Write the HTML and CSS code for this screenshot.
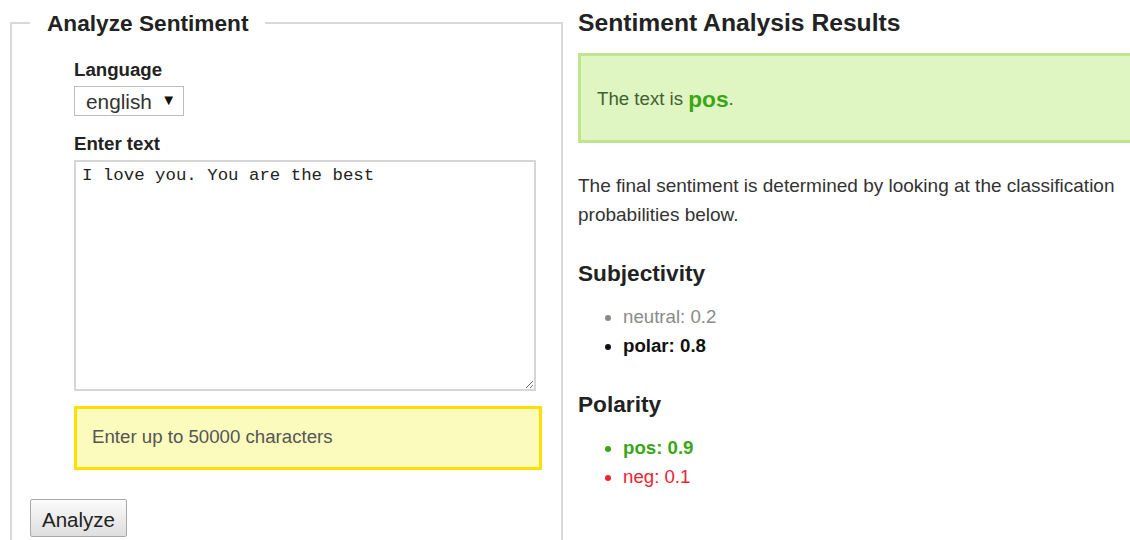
FILE: index.html
```html
<!DOCTYPE html>
<html lang="en">
<head>
<meta charset="utf-8">
<title>Sentiment Analysis</title>
<link rel="stylesheet" href="styles.css">
</head>
<body>
<div class="page">
  <form class="analyze-form">
    <fieldset class="analyze-box">
      <legend class="analyze-title">Analyze Sentiment</legend>
      <div class="fields">
        <label class="field-label" for="language">Language</label>
        <div class="select-wrap">
          <select id="language" class="lang-select">
            <option>english</option>
          </select>
        </div>
        <label class="field-label label-text" for="text">Enter text</label>
        <textarea id="text" class="text-input">I love you. You are the best</textarea>
        <div class="notice">Enter up to 50000 characters</div>
      </div>
      <button type="button" class="analyze-btn">Analyze</button>
    </fieldset>
  </form>

  <section class="results">
    <h2 class="results-title">Sentiment Analysis Results</h2>
    <div class="verdict">The text is <strong class="verdict-label">pos</strong>.</div>
    <p class="explain">The final sentiment is determined by looking at the classification probabilities below.</p>

    <h3 class="group-title">Subjectivity</h3>
    <ul class="probs">
      <li class="prob neutral">neutral: 0.2</li>
      <li class="prob polar">polar: 0.8</li>
    </ul>

    <h3 class="group-title">Polarity</h3>
    <ul class="probs">
      <li class="prob pos">pos: 0.9</li>
      <li class="prob neg">neg: 0.1</li>
    </ul>
  </section>
</div>
</body>
</html>
```

FILE: styles.css
```css
html, body {
  margin: 0;
  padding: 0;
  overflow: hidden;
  background: #fff;
}

body {
  font-family: "Liberation Sans", Arial, sans-serif;
  font-size: 18.67px;
  color: #333;
}

.page {
  display: flex;
  align-items: flex-start;
  width: 1300px;
}

/* left: input form */
.analyze-form {
  margin: 10px 0 0 10px;
  width: 553px;
  flex: none;
}

.analyze-box {
  margin: 0;
  border: 2px solid #d9d9d9;
  padding: 0 18px 30px 18px;
  min-width: 0;
}

.analyze-title {
  font-size: 22.67px;
  font-weight: bold;
  line-height: 26px;
  color: #222;
  padding: 0 17px;
}

.fields {
  display: flex;
  flex-direction: column;
  align-items: flex-start;
  margin-left: 44px;
  padding-top: 23px;
}

.field-label {
  display: block;
  font-weight: bold;
  line-height: 22px;
  color: #222;
}

.label-text {
  margin-top: 17px;
}

.select-wrap {
  position: relative;
  margin-top: 5px;
}

.lang-select {
  appearance: none;
  -webkit-appearance: none;
  width: 110px;
  height: 30px;
  border: 1px solid #bdbdbd;
  border-radius: 0;
  background: #fff;
  font-family: "Liberation Sans", Arial, sans-serif;
  font-size: 20.8px;
  color: #333;
  padding: 0 0 0 11px;
  margin: 0;
}

.select-wrap::after {
  content: "▼";
  position: absolute;
  right: 8px;
  top: 5px;
  font-size: 15px;
  color: #111;
  pointer-events: none;
}

.text-input {
  margin-top: 5px;
  width: 462px;
  height: 231px;
  box-sizing: border-box;
  border: 2px solid #d6d6d6;
  padding: 4px 6px;
  font-family: "Liberation Mono", "Courier New", monospace;
  font-size: 17.4px;
  line-height: 20px;
  color: #222;
  resize: both;
}

.notice {
  margin-top: 15px;
  width: 468px;
  height: 64px;
  box-sizing: border-box;
  border: 3px solid #ffdf00;
  background: #fbfbbd;
  padding: 0 15px 2px;
  display: flex;
  align-items: center;
  color: #555;
}

.analyze-btn {
  margin-top: 29px;
  width: 97px;
  height: 38px;
  border: 1px solid #a9a9a9;
  border-radius: 2px;
  background: linear-gradient(#fbfbfb, #dedede);
  font-family: "Liberation Sans", Arial, sans-serif;
  font-size: 20.5px;
  color: #222;
  padding: 3px 0 0;
}

/* right: results */
.results {
  margin-left: 15px;
  width: 620px;
  flex: none;
}

.results-title {
  margin: 8px 0 0;
  font-size: 24.67px;
  line-height: 30px;
  color: #222;
}

.verdict {
  margin-top: 15px;
  height: 90px;
  box-sizing: border-box;
  border: 3px solid #bfe68e;
  background: #dff5c2;
  padding: 2px 16px 0;
  display: flex;
  align-items: center;
  color: #3f6131;
  white-space: pre;
}

.verdict-label {
  font-size: 22.67px;
  color: #3aa616;
}

.explain {
  margin: 28px 0 0;
  width: 545px;
  font-size: 19px;
  line-height: 29px;
}

.group-title {
  margin: 30px 0 0;
  font-size: 22.67px;
  line-height: 28px;
  color: #222;
}

.probs {
  margin: 15px 0 0;
  padding-left: 45px;
  line-height: 29px;
}

.neutral { color: #8a8a8a; }
.polar { color: #111; font-weight: bold; }
.pos { color: #3aa616; font-weight: bold; }
.neg { color: #ee2330; }
```
